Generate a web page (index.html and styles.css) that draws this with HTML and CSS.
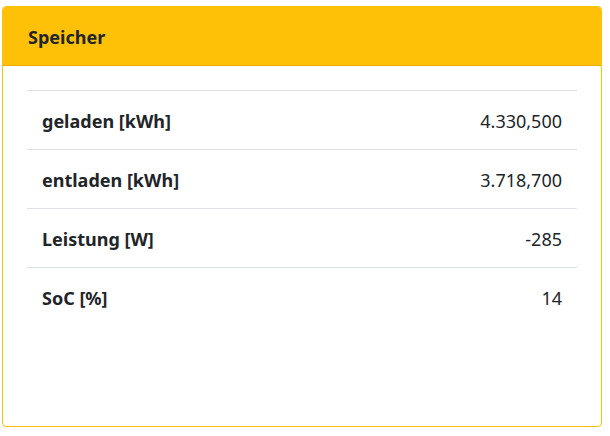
FILE: index.html
```html
<!DOCTYPE html>
<html lang="de">
<head>
<meta charset="utf-8">
<link rel="stylesheet" href="styles.css">
</head>
<body>
<div class="card">
  <div class="card-header">Speicher</div>
  <div class="card-body">
    <table class="table">
      <tbody>
        <tr><th>geladen [kWh]</th><td>4.330,500</td></tr>
        <tr><th>entladen [kWh]</th><td>3.718,700</td></tr>
        <tr><th>Leistung [W]</th><td>-285</td></tr>
        <tr><th>SoC [%]</th><td>14</td></tr>
      </tbody>
    </table>
  </div>
</div>
</body>
</html>
```
FILE: styles.css
```css
html, body {
  margin: 0;
  padding: 0;
  background: #fff;
}
body {
  padding: 6px 8px 9px 2px;
  font-family: "Noto Sans", "Open Sans", sans-serif;
  font-size: 18px;
  line-height: 27px;
  color: #212529;
}
.card {
  border: 1px solid #ffc107;
  border-radius: 4px;
  height: 421px;
  box-sizing: border-box;
  overflow: hidden;
}
.card-header {
  background: #ffc107;
  border-bottom: 1px solid #e6ad06;
  padding: 17px 25px 14px;
  font-weight: 700;
}
.card-body {
  padding: 24px;
}
.table {
  width: 100%;
  border-collapse: collapse;
}
.table th,
.table td {
  padding: 17px 15px 14px;
  border-top: 1px solid #dee2e6;
}
.table th {
  text-align: left;
  font-weight: 700;
}
.table td {
  text-align: right;
}
```
